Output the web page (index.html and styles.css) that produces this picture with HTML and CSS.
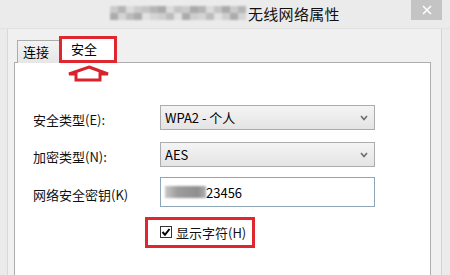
FILE: index.html
```html
<!DOCTYPE html>
<html>
<head>
<meta charset="utf-8">
<link rel="stylesheet" href="styles.css">
</head>
<body>
<div class="window">
  <div class="titlebar">
    <div class="title">
      <span class="blur-title">
        <i class="b1"></i><i class="b2"></i><i class="b3"></i><i class="b1"></i><i class="b4"></i><i class="b2"></i><i class="b5"></i><i class="b3"></i><i class="b4"></i><i class="b1"></i><i class="b5"></i><i class="b2"></i><i class="b3"></i><i class="b4"></i><i class="b5"></i><i class="b1"></i><i class="b2"></i>
      </span>
      <span class="title-text">无线网络属性</span>
    </div>
    <div class="close">
      <svg width="10" height="10" viewBox="0 0 10 10"><path d="M1 1L9 9M9 1L1 9" stroke="#fff" stroke-width="1.6"/></svg>
    </div>
  </div>
  <div class="client">
    <div class="tabs">
      <div class="tab">连接</div>
      <div class="tab active">安全</div>
    </div>
    <div class="panel">
      <svg class="arrow" width="46" height="18" viewBox="0 0 46 18">
        <path d="M23 2 L42 9 L34 9 L34 15 L10 15 L10 9 L3 9 Z" fill="#fff" stroke="#d9232c" stroke-width="3" stroke-linejoin="miter"/>
      </svg>
      <div class="form">
        <div class="row r1">
          <span class="label">安全类型(E):</span>
          <div class="select"><span>WPA2 - 个人</span>
            <svg class="chev" width="8" height="6" viewBox="0 0 8 6"><path d="M1 1L4 4.5L7 1" fill="none" stroke="#6d6d6d" stroke-width="1.6"/></svg>
          </div>
        </div>
        <div class="row r2">
          <span class="label">加密类型(N):</span>
          <div class="select"><span>AES</span>
            <svg class="chev" width="8" height="6" viewBox="0 0 8 6"><path d="M1 1L4 4.5L7 1" fill="none" stroke="#6d6d6d" stroke-width="1.6"/></svg>
          </div>
        </div>
        <div class="row r3">
          <span class="label">网络安全密钥(K)</span>
          <div class="input"><span class="blur-key"></span><span>23456</span></div>
        </div>
        <div class="check-wrap">
          <div class="check-row">
            <span class="checkbox">
              <svg width="12" height="12" viewBox="0 0 12 12"><rect x="0.5" y="0.5" width="11" height="11" fill="#fff" stroke="#333"/><path d="M2.5 6 L5 8.8 L9.5 3" fill="none" stroke="#000" stroke-width="2"/></svg>
            </span>
            <span class="check-label">显示字符(H)</span>
          </div>
        </div>
      </div>
    </div>
  </div>
</div>
</body>
</html>
```
FILE: styles.css
```css
* { box-sizing: border-box; }
html, body { margin: 0; padding: 0; }
body {
  width: 450px;
  height: 275px;
  overflow: hidden;
  font-family: "Noto Sans CJK SC", "Noto Sans", sans-serif;
  font-size: 13px;
  color: #000;
  background: #ebebeb;
}
.window {
  width: 450px;
  height: 275px;
  display: flex;
  flex-direction: column;
  background: #ebebeb;
  position: relative;
  overflow: hidden;
}
.titlebar {
  height: 29px;
  flex: none;
  display: flex;
  position: relative;
  border-bottom: 1px solid #e2e2e2;
}
.title {
  flex: 1;
  display: flex;
  align-items: center;
  padding-left: 110px;
  padding-bottom: 2px;
}
.blur-title {
  display: flex;
  height: 14px;
  width: 136px;
  filter: blur(1px);
  opacity: 0.8;
}
.blur-title i { flex: 1; display: block; height: 100%; }
.blur-title .b1 { background: linear-gradient(#c4c4c4 50%, #9c9c9c 50%); }
.blur-title .b2 { background: linear-gradient(#a8a8a8 50%, #cfcfcf 50%); }
.blur-title .b3 { background: linear-gradient(#d8d8d8 50%, #b0b0b0 50%); }
.blur-title .b4 { background: linear-gradient(#bbbbbb 50%, #e0e0e0 50%); }
.blur-title .b5 { background: linear-gradient(#9a9a9a 50%, #c8c8c8 50%); }
.title-text {
  font-size: 15px;
  color: #111;
  margin-left: 2px;
  letter-spacing: 0.3px;
}
.close {
  position: absolute;
  left: 411px;
  top: 0;
  width: 31px;
  height: 20px;
  background: #c4c4c4;
  display: flex;
  align-items: center;
  justify-content: center;
}
.client {
  flex: 1;
  margin-left: 7px;
  width: 435px;
  background: #f0f0f0;
  border-left: 1px solid #d8d8d8;
  border-right: 1px solid #d4d4d4;
  display: flex;
  flex-direction: column;
  min-height: 0;
}
.tabs {
  display: flex;
  align-items: flex-end;
  padding-left: 9px;
  margin-top: 7px;
  height: 27px;
  flex: none;
  position: relative;
  z-index: 2;
}
.tab {
  height: 23px;
  width: 43px;
  border: 1px solid #acacac;
  border-bottom: none;
  background: linear-gradient(#f3f3f3, #e6e6e6);
  padding-left: 5px;
  line-height: 21px;
  font-size: 13px;
}
.tab.active {
  height: 27px;
  width: 58px;
  margin-left: -1px;
  background: #fff;
  border: 3px solid #e0262f;
  padding-left: 9px;
  line-height: 20px;
}
.panel {
  flex: none;
  height: 240px;
  margin-left: 6px;
  width: 417px;
  margin-top: -1px;
  background: #fff;
  border: 1px solid #adadad;
  position: relative;
  padding: 42px 0 0 18px;
}
.arrow {
  position: absolute;
  left: 51px;
  top: 2px;
}
.form {
  display: flex;
  flex-direction: column;
}
.row {
  display: grid;
  grid-template-columns: 127px 215px;
  align-items: center;
}
.r2 { margin-top: 12px; }
.r3 { margin-top: 10px; }
.label { font-size: 13px; color: #111; position: relative; top: 2px; }
.select {
  height: 25px;
  border: 1px solid #acacac;
  background: linear-gradient(#f4f4f4, #e4e4e4);
  display: flex;
  align-items: center;
  justify-content: space-between;
  padding: 0 4px 0 4px;
  font-size: 13px;
}
.chev { margin-right: 2px; }
.input {
  height: 30px;
  border: 1px solid #8fa6b9;
  background: #fff;
  display: flex;
  align-items: center;
  padding-left: 4px;
  font-size: 13px;
}
.blur-key {
  width: 41px;
  height: 12px;
  background: linear-gradient(90deg, #c8c8c8, #9d9d9d 30%, #8f8f8f 80%, #b0b0b0);
  filter: blur(1.2px);
}
.check-wrap {
  margin-top: 10px;
  padding-left: 112px;
  display: flex;
}
.check-row {
  width: 110px;
  height: 31px;
  border: 3px solid #e0262f;
  display: flex;
  align-items: center;
  padding-left: 12px;
  padding-bottom: 1px;
}
.checkbox { display: flex; width: 12px; height: 12px; }
.check-label { margin-left: 4px; font-size: 13px; color: #111; }
```
